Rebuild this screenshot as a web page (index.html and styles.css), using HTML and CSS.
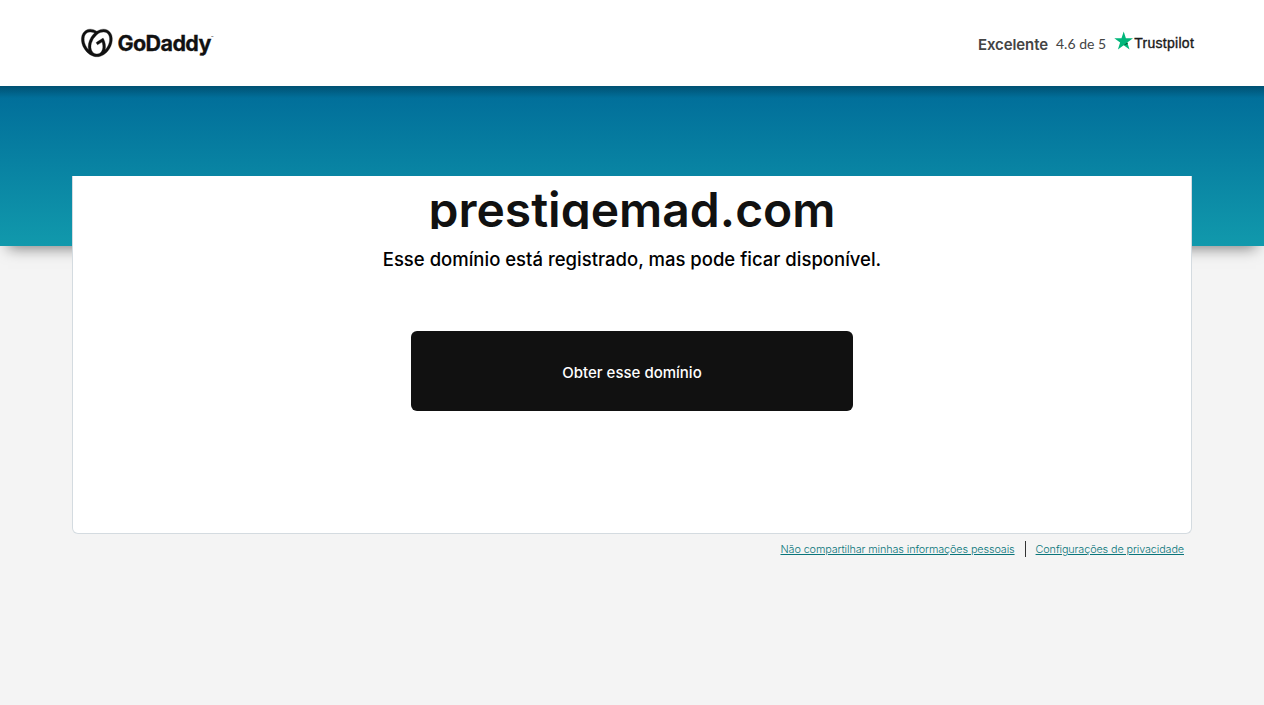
FILE: index.html
```html
<!DOCTYPE html>
<html lang="pt-BR">
<head>
  <meta charset="UTF-8" />
  <meta name="viewport" content="width=device-width, initial-scale=1" />
  <title>prestigemad.com</title>
  <link rel="stylesheet" href="styles.css">
</head>
<body>
  <header class="header">
    <a class="logo" href="#" aria-label="GoDaddy">
      <svg width="134" height="32" viewBox="0 0 134 32">
        <path fill="#111" stroke="#111" stroke-width=".25" transform="translate(.4 .5) scale(1.29)" d="M20.702 2.29c-2.494-1.554-5.778-1.187-8.706.654C9.076 1.104 5.79.736 3.3 2.29c-3.941 2.463-4.42 8.806-1.07 14.167 2.47 3.954 6.333 6.269 9.77 6.226 3.439.043 7.301-2.273 9.771-6.226 3.347-5.361 2.872-11.704-1.069-14.167zM4.042 15.328a12.838 12.838 0 01-1.546-3.541 10.12 10.12 0 01-.336-3.338c.15-1.98.956-3.524 2.27-4.345 1.315-.822 3.052-.87 4.903-.137.281.113.556.24.825.382A15.11 15.11 0 007.5 7.54c-2.035 3.255-2.655 6.878-1.945 9.765a13.247 13.247 0 01-1.514-1.98zm17.465-3.541a12.866 12.866 0 01-1.547 3.54 13.25 13.25 0 01-1.513 1.984c.635-2.589.203-5.76-1.353-8.734a.39.39 0 00-.563-.153l-4.852 3.032a.397.397 0 00-.126.546l.712 1.139a.395.395 0 00.547.126l3.145-1.965c.101.306.203.606.28.916.296 1.086.41 2.214.335 3.337-.15 1.982-.956 3.525-2.27 4.347a4.437 4.437 0 01-2.25.65h-.101a4.432 4.432 0 01-2.25-.65c-1.314-.822-2.121-2.365-2.27-4.347-.074-1.123.039-2.251.335-3.337a13.212 13.212 0 014.05-6.482 10.148 10.148 0 012.849-1.765c1.845-.733 3.586-.685 4.9.137 1.316.822 2.122 2.365 2.271 4.345a10.146 10.146 0 01-.33 3.334z"/>
        <text class="logo-text" x="36.5" y="24" textLength="94">GoDaddy</text>
        <text class="logo-tm" x="130" y="12">™</text>
      </svg>
    </a>
    <div class="rating">
      <span class="rating-label">Excelente</span>
      <span class="rating-score">4.6 de 5</span>
      <svg width="82" height="24" viewBox="0 0 82 24">
        <path fill="#00b67a" d="M19 9.2h-7.1L9.7 2.4 7.5 9.2H.3l5.8 4.3L3.9 20.4l5.8-4.2 5.8 4.2-2.2-6.9z"/>
        <path fill="#005128" d="M13.8 15.1l-.5-1.6-3.6 2.7z"/>
        <text class="trustpilot" x="20.3" y="19" textLength="59.5">Trustpilot</text>
      </svg>
    </div>
  </header>

  <div class="banner"></div>

  <main class="container">
    <div class="card">
      <h1>prestigemad.com</h1>
      <p class="message">Esse domínio está registrado, mas pode ficar disponível.</p>
      <a class="btn" href="#">Obter esse domínio</a>
    </div>
    <footer class="footer">
      <a class="link-share" href="#">Não compartilhar minhas informações pessoais</a>
      <span class="divider"></span>
      <a class="link-privacy" href="#">Configurações de privacidade</a>
    </footer>
  </main>
</body>
</html>
```
FILE: styles.css
```css
body {
  margin: 0;
  min-height: 100vh;
  background-color: #f4f4f4;
  font-family: Inter, "Noto Sans", sans-serif;
  color: #111;
}

/* Header */
.header {
  display: flex;
  justify-content: space-between;
  align-items: flex-start;
  height: 86px;
  padding: 27px 68px 0 81px;
  box-sizing: border-box;
  background-color: #fff;
}

.logo svg,
.rating svg {
  display: block;
  overflow: visible;
}

.logo-text {
  font-size: 21.5px;
  font-weight: 700;
  fill: #111;
  stroke: #111;
  stroke-width: 0.3px;
}

.logo-tm {
  font-size: 4px;
  fill: #111;
}

.rating {
  display: flex;
  align-items: center;
  height: 24px;
  margin-top: 2px;
  color: #444;
}

.rating-label {
  width: 78px;
  padding-top: 7px;
  font-size: 15px;
  line-height: 20px;
  font-weight: 600;
  letter-spacing: -0.1px;
}

.rating-score {
  width: 58px;
  padding-top: 6px;
  font-family: Lato, sans-serif;
  font-size: 14px;
  line-height: 20px;
  white-space: nowrap;
}

.trustpilot {
  font-family: "Liberation Sans", Arial, sans-serif;
  font-size: 14px;
  fill: #191919;
  stroke: #191919;
  stroke-width: 0.35px;
}

/* Blue strip behind the card */
.banner {
  height: 160px;
  background: linear-gradient(rgba(0, 0, 0, 0.25), rgba(0, 0, 0, 0) 12px), linear-gradient(#006c99, #1199ac);
  box-shadow: 0 10px 14px -8px rgba(0, 0, 0, 0.5);
}

/* Card */
.container {
  position: relative;
  width: 1120px;
  margin: -70px auto 0;
}

.card {
  display: flex;
  flex-direction: column;
  align-items: center;
  height: 358px;
  box-sizing: border-box;
  background-color: #fff;
  border: 1px solid #d4dbe0;
  border-top: 0;
  border-radius: 0 0 6px 6px;
}

/* Fixed height trims the descenders */
h1 {
  height: 44px;
  margin: 9px 0 0;
  overflow: hidden;
  font-size: 48px;
  line-height: 50px;
  font-weight: 600;
  letter-spacing: 0;
}

.message {
  margin: 18px 0 0;
  font-size: 18.5px;
  line-height: 24px;
  font-weight: 500;
  color: #000;
}

.btn {
  display: flex;
  align-items: center;
  justify-content: center;
  width: 442px;
  height: 80px;
  margin-top: 60px;
  padding-top: 3px;
  box-sizing: border-box;
  border-radius: 6px;
  background-color: #111;
  color: #fff;
  font-size: 15px;
  font-weight: 500;
  text-decoration: none;
}

/* Footer */
.footer {
  display: flex;
  justify-content: flex-end;
  align-items: center;
  height: 16px;
  padding: 7px 8px 0 0;
  font-size: 10.8px;
  font-weight: 300;
  letter-spacing: -0.1px;
}

.footer a {
  color: #09757a;
}

.divider {
  width: 1px;
  height: 16px;
  margin: 0 10px;
  background-color: #333;
}
```
